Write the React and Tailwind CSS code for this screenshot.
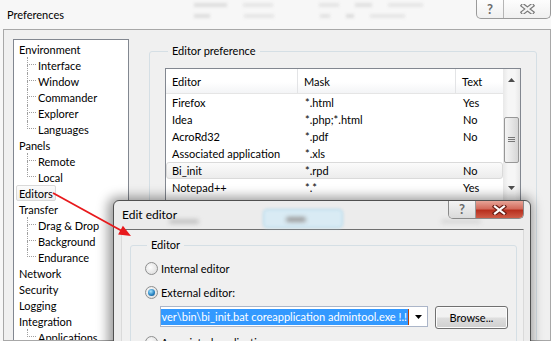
import React from "react";

const tree = [
  { label: "Environment", children: ["Interface", "Window", "Commander", "Explorer", "Languages"] },
  { label: "Panels", children: ["Remote", "Local"] },
  { label: "Editors", selected: true },
  { label: "Transfer", children: ["Drag & Drop", "Background", "Endurance"] },
  { label: "Network" },
  { label: "Security" },
  { label: "Logging" },
  { label: "Integration", children: ["Applications"] },
];

const editors = [
  { name: "Firefox", mask: "*.html", text: "Yes" },
  { name: "Idea", mask: "*.php;*.html", text: "No" },
  { name: "AcroRd32", mask: "*.pdf", text: "No" },
  { name: "Associated application", mask: "*.xls", text: "" },
  { name: "Bi_init", mask: "*.rpd", text: "No", hot: true },
  { name: "Notepad++", mask: "*.*", text: "Yes" },
];

function TreeChild({ label, last }) {
  return (
    <div className="flex h-4 items-stretch">
      <div className="ml-[13px] flex w-[9px] flex-col">
        <div className="h-1/2 border-b border-l border-dotted border-[#a0a0a0]" />
        {!last && <div className="flex-1 border-l border-dotted border-[#a0a0a0]" />}
      </div>
      <span className="ml-[2px] flex items-center">{label}</span>
    </div>
  );
}

function Tree() {
  return (
    <div className="mt-[9px] h-[320px] w-[116px] shrink-0 overflow-hidden border border-[#828790] bg-white pt-px">
      {tree.map((node) => (
        <div key={node.label}>
          <div className="flex h-4 items-center pl-[2px]">
            <span
              className={
                node.selected
                  ? "flex h-4 items-center rounded-[2px] border border-[#d9d9d9] bg-[linear-gradient(#fbfbfb,#eeeeee)] px-[2px]"
                  : "flex h-4 items-center px-[3px]"
              }
            >
              {node.label}
            </span>
          </div>
          {node.children &&
            node.children.map((c, i) => (
              <TreeChild key={c} label={c} last={i === node.children.length - 1} />
            ))}
        </div>
      ))}
    </div>
  );
}

function EditorList() {
  return (
    <div className="mt-[10px] flex h-[150px] w-[356px] overflow-hidden border border-[#828790] bg-white">
      <div className="flex-1">
        <div className="flex h-[25px] border-b border-[#e5e5e5] bg-[linear-gradient(#ffffff_55%,#f3f4f6)]">
          <div className="flex w-[132px] items-center border-r border-[#e3e4e6] pl-[6px]">Editor</div>
          <div className="flex w-[158px] items-center border-r border-[#e3e4e6] pl-[6px]">Mask</div>
          <div className="flex flex-1 items-center pl-[6px]">Text</div>
        </div>
        {editors.map((e) => (
          <div
            key={e.name}
            className={
              e.hot
                ? "flex h-[17px] items-center rounded-[3px] border border-[#dadada] bg-[linear-gradient(#fbfbfb,#ececec)]"
                : "flex h-[17px] items-center border border-transparent"
            }
          >
            <div className="w-[132px] pl-[5px]">{e.name}</div>
            <div className="w-[158px] pl-[6px]">{e.mask}</div>
            <div className="flex-1 pl-[6px]">{e.text}</div>
          </div>
        ))}
      </div>
      <div className="flex w-[17px] flex-col items-center bg-[linear-gradient(90deg,#e8e8e8,#f6f6f6_30%,#f6f6f6_70%,#e8e8e8)]">
        <svg width="7" height="4" viewBox="0 0 7 4" className="mt-[9px]">
          <path d="M0 4 L3.5 0 L7 4 Z" fill="#4d4d4d" />
        </svg>
        <div className="mt-[35px] flex h-[46px] w-[15px] items-center justify-center rounded-[2px] border border-[#979797] bg-[linear-gradient(90deg,#f4f4f4,#e6e6e6_50%,#d6d6d6)]">
          <svg width="7" height="6" viewBox="0 0 7 6">
            <path d="M0 0.5H7M0 2.5H7M0 4.5H7" stroke="#777" strokeWidth="1" />
          </svg>
        </div>
        <svg width="7" height="4" viewBox="0 0 7 4" className="mt-[23px]">
          <path d="M0 0 L3.5 4 L7 0 Z" fill="#4d4d4d" />
        </svg>
      </div>
    </div>
  );
}

function Radio({ checked }) {
  return (
    <span className="flex h-[13px] w-[13px] shrink-0 items-center justify-center rounded-full border border-[#8e8f8f] bg-[radial-gradient(circle_at_40%_40%,#fdfdfd,#d8d8d8)]">
      {checked && (
        <span className="h-[7px] w-[7px] rounded-full bg-[radial-gradient(circle_at_40%_35%,#a8e4ff,#2a86c4_55%,#0c4475)]" />
      )}
    </span>
  );
}

function CloseGlyph({ stroke, fill }) {
  return (
    <svg width="15" height="10" viewBox="0 0 15 10">
      <path d="M3 1.5 L12 8.5 M12 1.5 L3 8.5" stroke={stroke} strokeWidth="4.5" strokeLinecap="square" />
      <path d="M3 1.5 L12 8.5 M12 1.5 L3 8.5" stroke={fill} strokeWidth="2.2" strokeLinecap="square" />
    </svg>
  );
}

export default function App() {
  return (
    <div className="relative h-[341px] w-[556px] overflow-hidden bg-white font-['Lato',sans-serif] text-[11px] leading-none text-black">
      {/* Preferences window */}
      <div className="flex h-full w-[551px] flex-col bg-[#f7f7f7]">
        <div className="flex h-[29px] shrink-0 items-start">
          <span className="ml-[7px] mt-[9px] text-[11px]">Preferences</span>
          <div className="ml-[130px] mt-[3px] flex flex-col gap-[7px] blur-[1.5px]">
            <div className="flex gap-[16px]">
              <span className="h-[4px] w-[33px] bg-[#dedede]" />
              <span className="h-[4px] w-[30px] bg-[#e6e6e6]" />
              <span className="ml-[30px] h-[4px] w-[20px] bg-[#e4e4e4]" />
              <span className="h-[4px] w-[17px] bg-[#e0e0e0]" />
              <span className="h-[4px] w-[35px] bg-[#e6e6e6]" />
            </div>
            <div className="flex gap-[16px]">
              <span className="h-[4px] w-[16px] bg-[#dedede]" />
              <span className="ml-[18px] h-[4px] w-[30px] bg-[#e6e6e6]" />
              <span className="ml-[30px] h-[4px] w-[10px] bg-[#e2e2e2]" />
              <span className="h-[4px] w-[8px] bg-[#dcdcdc]" />
              <span className="h-[4px] w-[35px] bg-[#e6e6e6]" />
            </div>
          </div>
          <div className="ml-auto flex h-[19px] overflow-hidden rounded-b-[5px] border border-t-0 border-[#9a9a9a] bg-[linear-gradient(#fdfdfd,#f0f0f0)]">
            <div className="flex w-[27px] items-center justify-center border-r border-[#b5b5b5] text-[13px] font-bold text-[#6a6a6a]">
              ?
            </div>
            <div className="flex w-[46px] items-center justify-center">
              <CloseGlyph stroke="#7a7a7a" fill="#f4f4f4" />
            </div>
          </div>
        </div>

        <div className="ml-[3px] flex min-h-0 flex-1 items-start overflow-hidden border border-[#a8a8a8] bg-[#f0f0f0] pl-[9px]">
          <Tree />
          <fieldset className="ml-[20px] mt-[14px] h-[300px] w-[388px] shrink-0 rounded-[3px] border border-[#d5dfe5] pl-[15px]">
            <legend className="ml-[3px] px-[4px] leading-[14px]">Editor preference</legend>
            <EditorList />
          </fieldset>
        </div>
      </div>

      {/* Edit editor dialog */}
      <div className="absolute left-[113px] top-[200px] flex h-[160px] w-[418px] flex-col rounded-t-[6px] border border-[#505050] bg-[#ececec] shadow-[-2px_0_12px_3px_rgba(0,0,0,0.4)]">
        <div className="relative flex h-[28px] shrink-0 items-start">
          <div className="absolute left-[55px] top-[18px] h-[5px] w-[30px] rounded bg-[#c4c4c4] blur-[2px]" />
          <div className="absolute left-[149px] top-[8px] h-[19px] w-[80px] rounded-[4px] border border-[#a6d3ea] bg-[#d9ebf4] blur-[1.5px]" />
          <div className="absolute left-[172px] top-[16px] h-[5px] w-[20px] rounded bg-[#9a9a9a] blur-[2px]" />
          <div className="absolute left-[327px] top-[18px] h-[5px] w-[40px] rounded bg-[#d9d9d9] blur-[2px]" />
          <span className="relative ml-[8px] mt-[8px] text-[12px]">Edit editor</span>
          <div className="relative ml-auto mr-[6px] flex h-[18px] overflow-hidden rounded-b-[5px] border border-t-0 border-[#8a8a8a]">
            <div className="flex w-[27px] items-center justify-center border-r border-[#9a9a9a] bg-[linear-gradient(#f4f4f4,#dadada)] text-[13px] font-bold text-[#6a6a6a]">
              ?
            </div>
            <div className="flex w-[47px] items-center justify-center bg-[linear-gradient(#e7a497,#d36b5c_45%,#b8301f_55%,#cf5d48)]">
              <CloseGlyph stroke="#6b1f16" fill="#ffffff" />
            </div>
          </div>
        </div>
        <div className="ml-[7px] mr-[6px] min-h-0 flex-1 overflow-hidden border border-b-0 border-[#6f6f6f] border-l-[#dadada] border-r-[#dadada] bg-[#f0f0f0] pl-[8px] pr-[6px] pt-[8px]">
          <fieldset className="h-[200px] w-[387px] rounded-[3px] border border-[#d5dfe5] pl-[14px]">
            <legend className="ml-[2px] px-[4px] leading-[14px]">Editor</legend>
            <div className="mt-[8px] flex h-4 items-center gap-[3px]">
              <Radio />
              <span>Internal editor</span>
            </div>
            <div className="mt-[8px] flex h-4 items-center gap-[3px]">
              <Radio checked />
              <span>External editor:</span>
            </div>
            <div className="ml-[15px] mt-[6px] flex items-start gap-[7px]">
              <div className="flex h-[21px] w-[268px] items-center border border-[#abb5c8] bg-white">
                <div className="flex w-[247px] justify-end overflow-hidden">
                  <span className="flex h-[16px] shrink-0 items-center whitespace-nowrap bg-[#3399ff] pr-[1px] text-white">
                    ver\bin\bi_init.bat coreapplication admintool.exe !.!
                  </span>
                </div>
                <span className="h-[16px] w-px bg-[#c04000]" />
                <div className="flex flex-1 items-center justify-center">
                  <svg width="7" height="4" viewBox="0 0 7 4">
                    <path d="M0 0 L3.5 4 L7 0 Z" fill="#000" />
                  </svg>
                </div>
              </div>
              <button className="h-[23px] w-[73px] rounded-[3px] border border-[#707070] bg-[linear-gradient(#f2f2f2_45%,#dddddd_55%,#cfcfcf)] text-[11px] shadow-[inset_0_0_0_1px_#fcfcfc]">
                Browse...
              </button>
            </div>
            <div className="mt-[5px] flex h-4 items-center gap-[3px]">
              <Radio />
              <span>Associated application</span>
            </div>
          </fieldset>
        </div>
      </div>

      {/* red annotation arrow */}
      <svg className="pointer-events-none absolute left-0 top-0" width="556" height="341" viewBox="0 0 556 341">
        <line x1="53" y1="193" x2="122" y2="231" stroke="#e8191c" strokeWidth="1.8" />
        <path d="M131 236 L118.1 234.6 L122.9 225.8 Z" fill="#e8191c" />
      </svg>
    </div>
  );
}
